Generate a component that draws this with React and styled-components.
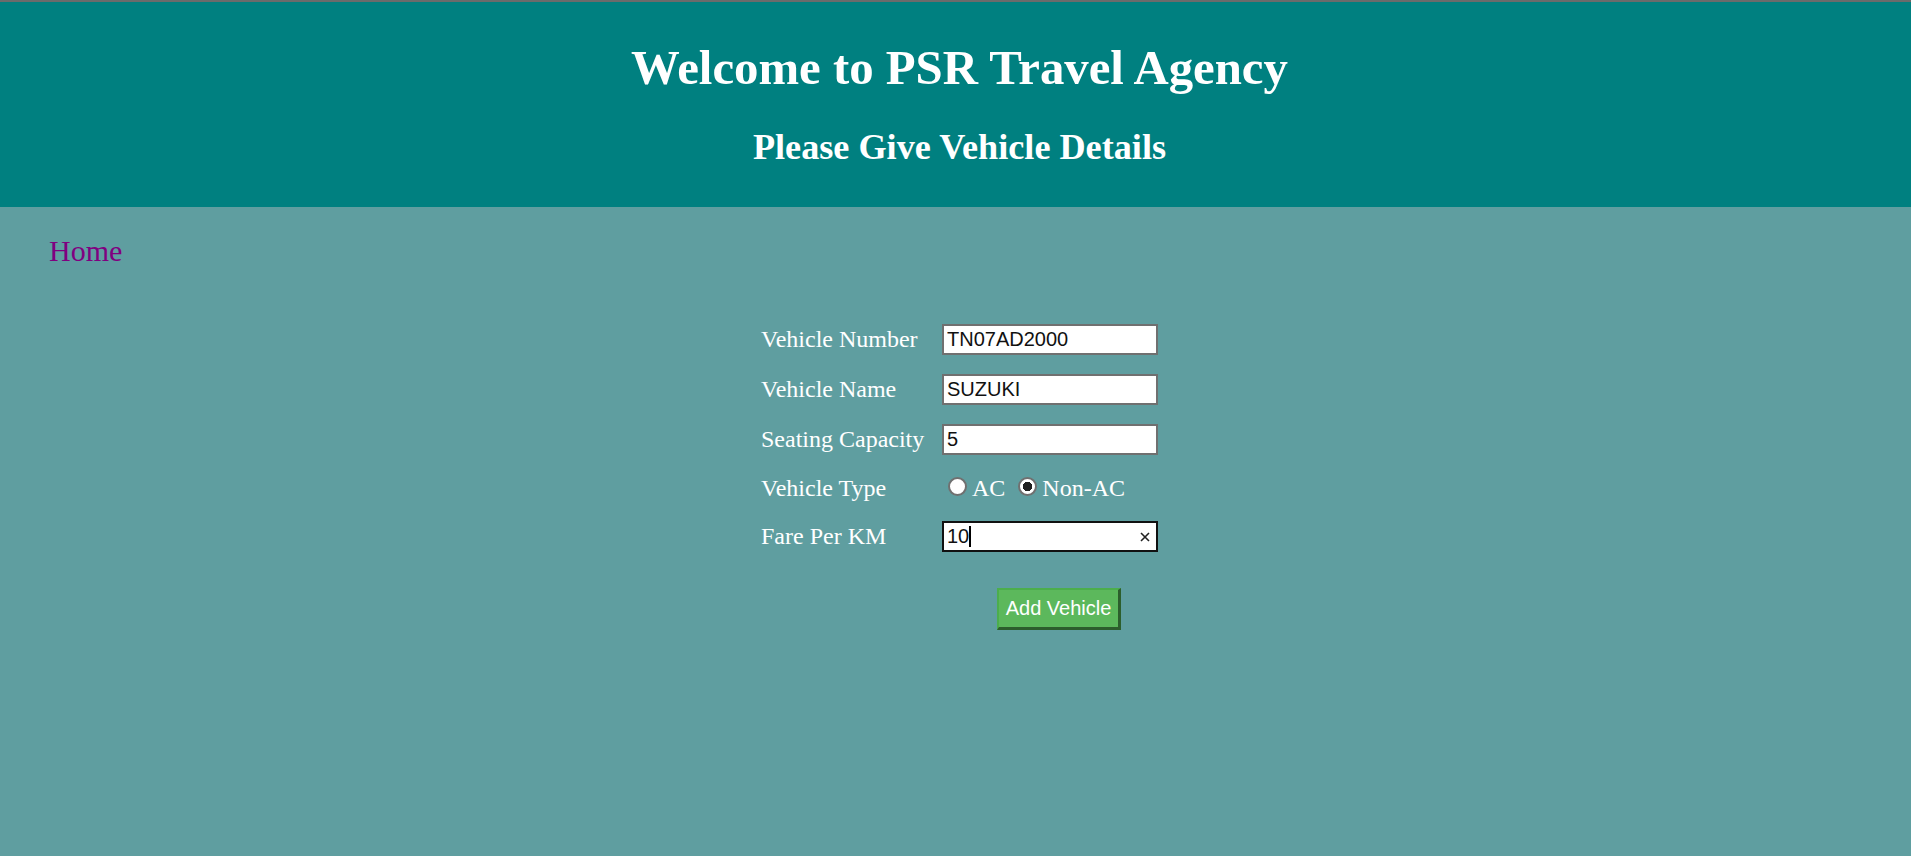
import React from "react";
import styled, { createGlobalStyle } from "styled-components";

// Global page styles

const GlobalStyle = createGlobalStyle`
  html, body {
    margin: 0;
    padding: 0;
    background: #5f9ea0;
  }
  body {
    font-family: "Liberation Serif", "Times New Roman", serif;
  }
`;

const Page = styled.div`
  min-height: 856px;
  background: #5f9ea0;
`;

const Header = styled.header`
  box-sizing: border-box;
  height: 207px;
  border-top: 2px solid #6b6b6b;
  background: #008080;
  padding: 38px 0 0 8px;
  text-align: center;
  color: #ffffff;
`;

const Title = styled.h1`
  margin: 0;
  font-size: 48.8px;
  line-height: 1.15;
  font-weight: bold;
`;

const SubTitle = styled.h2`
  margin: 31px 0 0;
  font-size: 36.2px;
  line-height: 1.15;
  font-weight: bold;
`;

const Nav = styled.nav`
  padding: 27px 0 0 49px;
`;

const NavLink = styled.a`
  font-size: 30px;
  line-height: 1.15;
  color: #800080;
  text-decoration: none;
`;

const FormWrap = styled.div`
  display: flex;
  justify-content: center;
  padding-left: 8px;
  margin-top: 46px;
`;

const FormGrid = styled.form`
  display: grid;
  grid-template-columns: 181px 216px;
  grid-template-rows: 50px 50px 50px 48px 48px auto;
  align-items: center;
`;

const Label = styled.label`
  font-size: 24px;
  line-height: 1.15;
  color: #ffffff;
  white-space: nowrap;
`;

const TextInput = styled.input`
  box-sizing: border-box;
  width: 216px;
  height: 31px;
  margin: 0;
  padding: 0 3px;
  border: 2px solid #707070;
  background: #ffffff;
  font-family: "Liberation Sans", Arial, sans-serif;
  font-size: 20px;
  color: #111111;
  outline: none;
`;

const FocusBox = styled.div`
  box-sizing: border-box;
  width: 216px;
  height: 31px;
  display: flex;
  align-items: center;
  padding: 0 6px 0 3px;
  border: 2px solid #111111;
  background: #ffffff;
  font-family: "Liberation Sans", Arial, sans-serif;
  font-size: 20px;
  color: #111111;
`;

const Caret = styled.span`
  width: 2px;
  height: 21px;
  background: #000000;
`;

const ClearIcon = styled.svg`
  margin-left: auto;
  width: 10px;
  height: 10px;
`;

const RadioGroup = styled.div`
  display: flex;
  align-items: center;
  padding-left: 6px;
`;

const RadioOption = styled.label`
  display: flex;
  align-items: center;
  gap: 5px;
  margin-right: ${(p) => (p.$last ? 0 : "13px")};
  font-size: 24px;
  line-height: 1.15;
  color: #ffffff;
`;

const Radio = styled.input`
  appearance: none;
  box-sizing: border-box;
  width: 19px;
  height: 19px;
  margin: 0;
  border: 2px solid #707070;
  border-radius: 50%;
  background: #ffffff;
  position: relative;
  top: -2px;

  &:checked {
    background: radial-gradient(circle, #1f1f1f 0 4.5px, #ffffff 5px);
  }
`;

const ButtonCell = styled.div`
  grid-column: 2;
  align-self: start;
  padding: 27px 0 0 55px;
`;

const SubmitButton = styled.button`
  box-sizing: border-box;
  width: 124px;
  height: 42px;
  padding: 0;
  border-style: solid;
  border-width: 2px 3px 3px 2px;
  border-color: #4cae4c #2c5e2c #2c5e2c #4cae4c;
  background: #5cb85c;
  font-family: "Liberation Sans", Arial, sans-serif;
  font-size: 20px;
  color: #ffffff;
  cursor: pointer;
`;

const fields = [
  { label: "Vehicle Number", value: "TN07AD2000" },
  { label: "Vehicle Name", value: "SUZUKI" },
  { label: "Seating Capacity", value: "5" },
];

export default function App() {
  return (
    <Page>
      <GlobalStyle />
      <Header>
        <Title>Welcome to PSR Travel Agency</Title>
        <SubTitle>Please Give Vehicle Details</SubTitle>
      </Header>

      <Nav>
        <NavLink href="#">Home</NavLink>
      </Nav>

      <FormWrap>
        <FormGrid onSubmit={(e) => e.preventDefault()}>
          {fields.map((f) => (
            <React.Fragment key={f.label}>
              <Label>{f.label}</Label>
              <TextInput type="text" defaultValue={f.value} />
            </React.Fragment>
          ))}

          <Label>Vehicle Type</Label>
          <RadioGroup>
            <RadioOption>
              <Radio type="radio" name="type" value="AC" />
              AC
            </RadioOption>
            <RadioOption $last>
              <Radio type="radio" name="type" value="Non-AC" defaultChecked />
              Non-AC
            </RadioOption>
          </RadioGroup>

          <Label>Fare Per KM</Label>
          <FocusBox>
            <span>10</span>
            <Caret />
            <ClearIcon viewBox="0 0 10 10">
              <path d="M1 1 L9 9 M9 1 L1 9" stroke="#222" strokeWidth="1.6" />
            </ClearIcon>
          </FocusBox>

          <ButtonCell>
            <SubmitButton type="submit">Add Vehicle</SubmitButton>
          </ButtonCell>
        </FormGrid>
      </FormWrap>
    </Page>
  );
}
